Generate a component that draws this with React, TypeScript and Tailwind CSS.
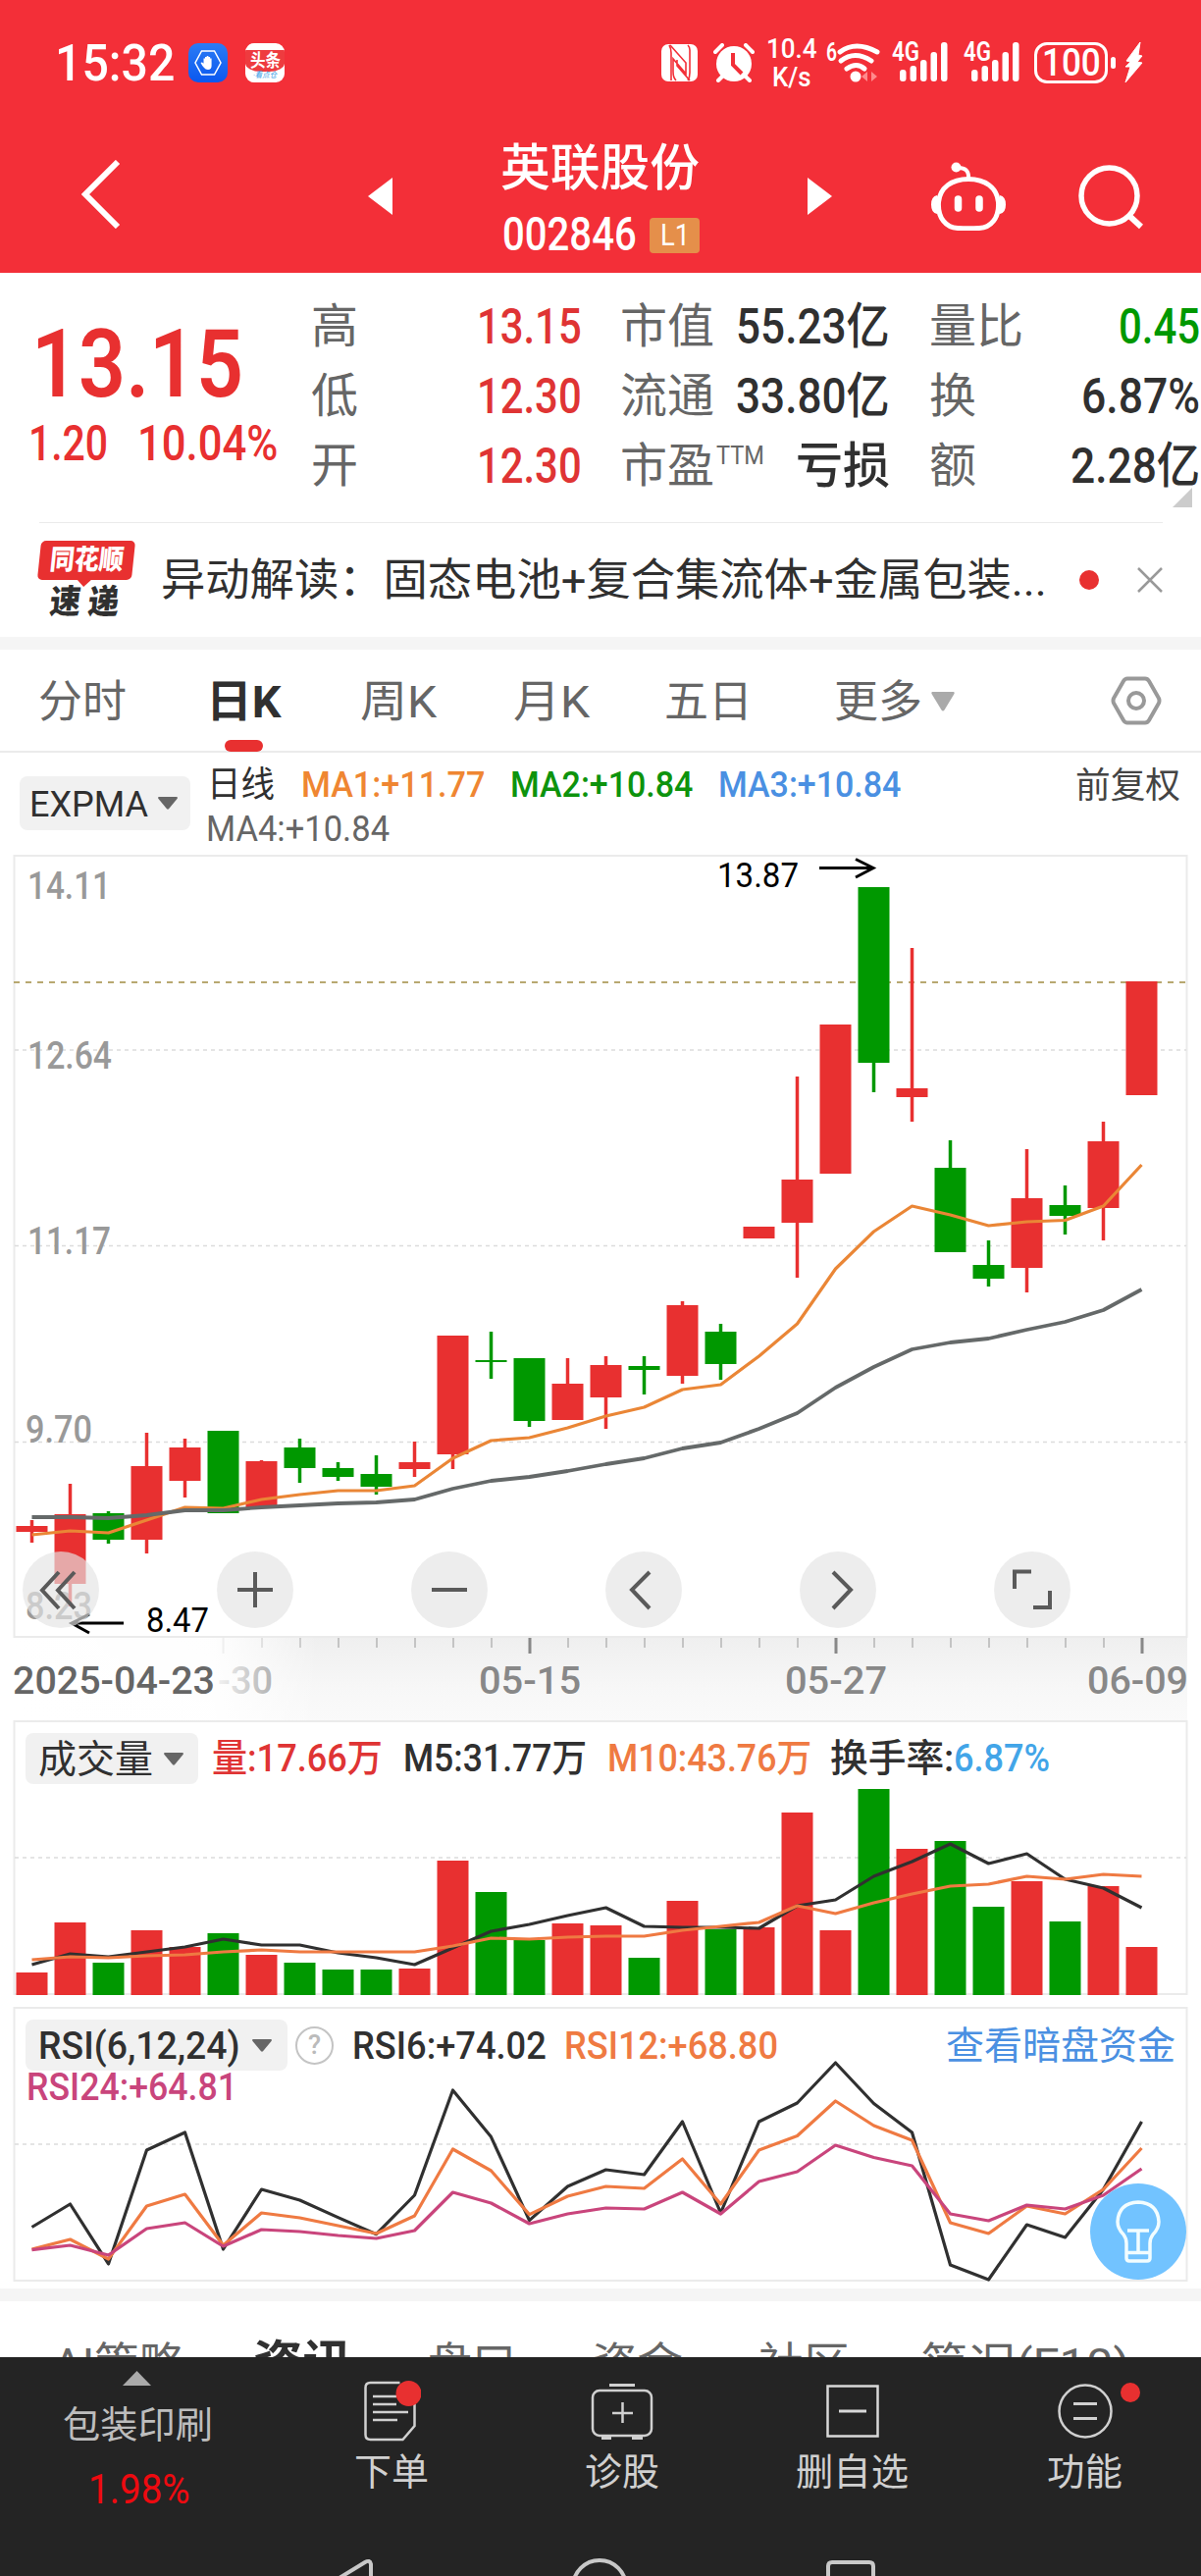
import React, { useLayoutEffect, useRef, useState } from "react"
import clsx from "clsx"

const RED = "#e83030"
const GREEN = "#009800"

// Squeezes or stretches one line of text to a given width
const Fit = ({ w, className, children }: { w: number; className?: string; children: React.ReactNode }) => {
  const ref = useRef<HTMLSpanElement>(null)
  const [scale, setScale] = useState(1)

  useLayoutEffect(() => {
    if (ref.current) setScale(w / ref.current.offsetWidth)
  }, [w, children])

  return (
    <span className={clsx("inline-flex shrink-0 whitespace-nowrap leading-none", className)} style={{ width: w }}>
      <span ref={ref} className="inline-block shrink-0 origin-left" style={{ transform: `scaleX(${scale})` }}>
        {children}
      </span>
    </span>
  )
}

/* ---------- chart data, already in page pixels ---------- */

// up, wick top, body top, body bottom, wick bottom, volume top
const CANDLES: [number, number, number, number, number, number][] = [
  [1, 1549, 1555, 1561, 1572, 2010],
  [1, 1512, 1543, 1614, 1637, 1959],
  [0, 1540, 1542, 1569, 1573, 2000],
  [1, 1460, 1494, 1569, 1583, 1967],
  [1, 1466, 1475, 1509, 1526, 1984],
  [0, 1458, 1458, 1542, 1542, 1970],
  [1, 1488, 1489, 1536, 1536, 1992],
  [0, 1466, 1475, 1496, 1511, 2000],
  [0, 1490, 1496, 1505, 1509, 2007],
  [0, 1483, 1502, 1515, 1523, 2007],
  [1, 1469, 1490, 1497, 1505, 2006],
  [1, 1361, 1361, 1482, 1497, 1896],
  [0, 1357, 1386, 1388, 1405, 1928],
  [0, 1384, 1384, 1448, 1454, 1977],
  [1, 1384, 1410, 1447, 1447, 1960],
  [1, 1382, 1391, 1424, 1456, 1962],
  [0, 1382, 1392, 1396, 1421, 1995],
  [1, 1326, 1330, 1402, 1410, 1937],
  [0, 1349, 1357, 1390, 1406, 1966],
  [1, 1250, 1250, 1262, 1262, 1964],
  [1, 1097, 1202, 1246, 1302, 1847],
  [1, 1044, 1044, 1196, 1196, 1967],
  [0, 904, 904, 1083, 1113, 1823],
  [1, 966, 1109, 1118, 1143, 1884],
  [0, 1162, 1190, 1276, 1276, 1876],
  [0, 1264, 1289, 1303, 1311, 1943],
  [1, 1171, 1221, 1292, 1317, 1917],
  [0, 1208, 1228, 1239, 1258, 1958],
  [1, 1143, 1163, 1231, 1264, 1922],
  [1, 1000, 1000, 1116, 1116, 1984],
]

const MA_FAST = [1564, 1560, 1562, 1549, 1536, 1537, 1528, 1523, 1519, 1519, 1514, 1486, 1468, 1465, 1455, 1443, 1434, 1416, 1411, 1382, 1349, 1293, 1255, 1229, 1238, 1249, 1245, 1243.5, 1229, 1187]
const MA_SLOW = [1546, 1546, 1547, 1544, 1539, 1539, 1536, 1534, 1532, 1531, 1528, 1517, 1509, 1505, 1499, 1492, 1486, 1476, 1470, 1456, 1440, 1414, 1393, 1375, 1368, 1364, 1355, 1347, 1335, 1314]
const VOL_M5 = [2002, 1991, 1994, 1989, 1984, 1976, 1982, 1982, 1990, 1995, 2002, 1985, 1968, 1961, 1952, 1944, 1963, 1964, 1964, 1965, 1942, 1936, 1912, 1897, 1879, 1899, 1889, 1915, 1924, 1944]
const VOL_M10 = [1997, 1994, 1995, 1993, 1992, 1989, 1987, 1989, 1989, 1989, 1989, 1983, 1975, 1976, 1974, 1973, 1973, 1967, 1963, 1959, 1942, 1950, 1939, 1930, 1922, 1920, 1912, 1915, 1910, 1912]
const RSI6 = [2269.5, 2246, 2307, 2191, 2173, 2292, 2231, 2242, 2259.6, 2276.7, 2237, 2130, 2177.6, 2262.6, 2228, 2211, 2216, 2162, 2255, 2162, 2143, 2102, 2143.5, 2173, 2308, 2323, 2267, 2280, 2231, 2162]
const RSI12 = [2292, 2282, 2302, 2248, 2236, 2288, 2255, 2260, 2268, 2276, 2258, 2190, 2212, 2256.6, 2238, 2228, 2230, 2200, 2246, 2191, 2176.5, 2141, 2166, 2181, 2265, 2276, 2248, 2256, 2231, 2189]
const RSI24 = [2292.6, 2288, 2298, 2271, 2265, 2289, 2272, 2274, 2278, 2281, 2273, 2234, 2245, 2266, 2256, 2250, 2251, 2234, 2256, 2223, 2213, 2186, 2198.5, 2207, 2256, 2263, 2247, 2251, 2237, 2210]

const cx = (i: number) => 32.5 + i * 39

const Line = ({ data, color, width = 3.2 }: { data: number[]; color: string; width?: number }) => (
  <polyline points={data.map((y, i) => `${cx(i)},${y}`).join(" ")} fill="none" stroke={color} strokeWidth={width} strokeLinejoin="round" />
)

const Grid = ({ y }: { y: number }) => (
  <line x1={15} x2={1209} y1={y} y2={y} stroke="#dcdcdc" strokeWidth={1.5} strokeDasharray="4 4" />
)

const ChartText = ({ x, y, w, size = 39, weight = 500, fill = "#999", children }: { x: number; y: number; w: number; size?: number; weight?: number; fill?: string; children: string }) => (
  <text x={x} y={y} fontSize={size} fontWeight={weight} fill={fill} textLength={w} lengthAdjust="spacingAndGlyphs">{children}</text>
)

/* ---------- small pieces ---------- */

const Caret = ({ className }: { className?: string }) => (
  <svg viewBox="0 0 20 13" className={clsx("h-[13px] w-5 shrink-0", className)}>
    <path d="M1 0h18q1.500 .4.500 2L11 12.300q-1 .9-2 0L.5 2Q-.5.400 1 0z" fill="currentColor" />
  </svg>
)

const Signal = ({ className }: { className?: string }) => (
  <svg viewBox="0 0 57 44" className={clsx("h-11 w-[57px] shrink-0 overflow-visible", className)} fill="#fff">
    <text x="0" y="20" fontSize="27" fontWeight="600" textLength="28" lengthAdjust="spacingAndGlyphs">4G</text>
    <rect x="8" y="29" width="6.500" height="12" rx="3" />
    <rect x="18.500" y="25" width="6.500" height="16" rx="3" />
    <rect x="29" y="19" width="6.500" height="22" rx="3" />
    <rect x="39.500" y="11" width="6.500" height="30" rx="3" />
    <rect x="50" y="1" width="6.500" height="40" rx="3" />
  </svg>
)

const StatusBar = () => (
  <div className="flex h-32 items-center text-white">
    <Fit w={122} className="ml-[56px] text-[51px] font-medium">15:32</Fit>
    <div className="ml-[14px] flex size-10 items-center justify-center rounded-[10px] bg-gradient-to-b from-[#2b7bf5] to-[#0a57ef]">
      <svg viewBox="0 0 28 26" className="h-[26px] w-7">
        <path d="M7.500 1h13L27 13l-6.500 12h-13L1 13z" fill="none" stroke="#fff" strokeWidth="1.500" />
        <path d="M10 18q-2-2-3.500-5 1.200-1.200 3 .8V8.500h1.500V7h1.700V6h1.700v1h1.700v1.500h1.500V16q0 4-3.600 4-2.600 0-4-2z" fill="#fff" />
      </svg>
    </div>
    <div className="ml-[18px] flex size-10 flex-col items-center overflow-hidden rounded-[9px] bg-white">
      <div className="mt-[7px] flex h-[22px] w-full items-center justify-center rounded-b-[40%] bg-[#ee3b3f]">
        <Fit w={31} className="text-[18px] font-bold">头条</Fit>
      </div>
      <Fit w={24} className="text-[8px] text-[#3ba0e6] italic">·看点仓</Fit>
    </div>

    <svg viewBox="0 0 37 38" className="ml-[384px] h-[38px] w-[37px] shrink-0">
      <rect width="37" height="38" rx="7" fill="#fff" />
      <path d="M9 1l16 18v11L12 15v13q0 6 3 9M29 37L16 22v-6" fill="none" stroke="#f32f38" strokeWidth="1.600" />
      <path d="M8 1q2 3 2 8v28M27 37q2-3 2-8V6q0-3-2-5" fill="none" stroke="#f32f38" strokeWidth="1.600" />
    </svg>
    <svg viewBox="0 0 42 40" className="ml-4 h-10 w-[42px] shrink-0">
      <circle cx="21" cy="21" r="18" fill="#fff" />
      <path d="M2 9l7-7M40 9l-7-7M5 38l6-6M37 38l-6-6" stroke="#fff" strokeWidth="4" strokeLinecap="round" />
      <path d="M20 10v12l9 9" fill="none" stroke="#f32f38" strokeWidth="4" />
    </svg>
    <div className="ml-[12px] flex flex-col items-center gap-[2px] font-medium">
      <Fit w={52} className="text-[28px] leading-[23px]">10.4</Fit>
      <Fit w={40} className="text-[27px] leading-[23px]">K/s</Fit>
    </div>
    <svg viewBox="0 0 55 44" className="ml-[9px] h-11 w-[55px] shrink-0 overflow-visible">
      <text x="0" y="20" fontSize="26" fontWeight="600" fill="#fff" textLength="11" lengthAdjust="spacingAndGlyphs">6</text>
      <path d="M14 11q16-12 38 0M15 20q14-11 31 0M21 28q10-7 18 0" fill="none" stroke="#fff" strokeWidth="5" strokeLinecap="round" />
      <circle cx="30" cy="36" r="5.500" fill="#fff" />
      <path d="M36 36l6-5v10zM52 36l-6-5v10z" fill="#ff8a8c" />
    </svg>
    <Signal className="ml-[12px]" />
    <Signal className="ml-4" />
    <div className="ml-[15px] flex h-[42px] w-[75px] items-center justify-center rounded-[13px] border-[3px] border-white">
      <Fit w={60} className="text-[38px] font-medium">100</Fit>
    </div>
    <div className="ml-[3px] h-3 w-[5px] rounded-full bg-white" />
    <svg viewBox="0 0 20 42" className="ml-2 h-[42px] w-5 shrink-0">
      <path d="M17 0L3 19l4 1-5 5 5 0L2 41l17-20-5-1 5-6-4-1z" fill="#fff" stroke="#fff" />
    </svg>
  </div>
)

const TitleBar = () => (
  <div className="flex h-[150px] text-white">
    <svg viewBox="0 0 40 70" className="mt-[35px] ml-[83px] h-[70px] w-10 shrink-0">
      <path d="M37 2L4 35l33 33" fill="none" stroke="#fff" strokeWidth="6" />
    </svg>
    <svg viewBox="0 0 25 38" className="mt-[53px] ml-[252px] h-[38px] w-[25px] shrink-0">
      <path d="M25 0v38L0 19z" fill="#fff" />
    </svg>
    <div className="ml-[110px] flex w-[203px] flex-col">
      <Fit w={203} className="mt-[18px] text-[51px] font-medium">英联股份</Fit>
      <div className="mt-[18px] flex items-center">
        <Fit w={137} className="ml-[2px] h-12 items-center text-[48px] font-medium">002846</Fit>
        <div className="mt-px ml-[13px] flex h-9 w-[51px] items-center justify-center rounded-[4px] bg-[#e58f4a]">
          <Fit w={30} className="text-[31px]">L1</Fit>
        </div>
      </div>
    </div>
    <svg viewBox="0 0 25 38" className="mt-[53px] ml-[110px] h-[38px] w-[25px] shrink-0">
      <path d="M0 0v38l25-19z" fill="#fff" />
    </svg>
    <svg viewBox="0 0 76 70" className="mt-[37px] ml-[101px] h-[70px] w-[76px] shrink-0" fill="none" stroke="#fff" strokeWidth="5">
      <path d="M38 17.500C55 17.500 67 26 68.500 41 69.500 57 61 67 49 67.500q-11 .5-22 0C15 67 6.500 57 7.500 41 9 26 21 17.500 38 17.500z" />
      <path d="M26 6q13-1 12 11" strokeWidth="4" />
      <circle cx="25.500" cy="5.500" r="5" fill="#fff" stroke="none" />
      <path d="M6 34q-6 1-6 9.500T6 53zM70 34q6 1 6 9.500T70 53z" fill="#fff" stroke="none" />
      <path d="M27.500 38v9M49 38v9" strokeWidth="7.500" strokeLinecap="round" />
    </svg>
    <svg viewBox="0 0 66 66" className="mt-[40px] ml-[74px] h-[66px] w-[66px] shrink-0" fill="none" stroke="#fff" strokeWidth="5.500">
      <circle cx="31.500" cy="31.500" r="28.500" />
      <path d="M52 52l12 11" strokeWidth="6" />
    </svg>
  </div>
)

type Quote = { label: React.ReactNode; value: string; w: number; tone?: string }

const QuoteCol = ({ rows, className }: { rows: Quote[]; className?: string }) => (
  <div className={clsx("flex flex-col text-[48px]", className)}>
    {rows.map((r, i) => (
      <div key={i} className="flex h-[71px] items-center justify-between">
        <span className="leading-none whitespace-nowrap text-[#666]">{r.label}</span>
        <Fit w={r.w} className={clsx("text-[50px] font-medium", r.tone ?? "text-[#303030]")}>{r.value}</Fit>
      </div>
    ))}
  </div>
)

const QuotePanel = () => (
  <div className="relative flex h-[254px] bg-white">
    <div className="flex w-[317px] shrink-0 flex-col text-[#e83030]">
      <Fit w={216} className="mt-[45px] ml-[32px] text-[97px] font-semibold">13.15</Fit>
      <div className="mt-[7px] flex text-[50px] font-medium">
        <Fit w={81} className="ml-[29px]">1.20</Fit>
        <Fit w={143} className="ml-[30px]">10.04%</Fit>
      </div>
    </div>
    <QuoteCol
      className="mt-[19px] w-[276px]"
      rows={[
        { label: "高", value: "13.15", w: 107, tone: "text-[#df3434]" },
        { label: "低", value: "12.30", w: 107, tone: "text-[#df3434]" },
        { label: "开", value: "12.30", w: 107, tone: "text-[#df3434]" },
      ]}
    />
    <QuoteCol
      className="mt-[19px] ml-[39px] w-[275px]"
      rows={[
        { label: "市值", value: "55.23亿", w: 157 },
        { label: "流通", value: "33.80亿", w: 157 },
        {
          label: (
            <span className="flex">
              市盈<Fit w={49} className="ml-[2px] text-[26px]">TTM</Fit>
            </span>
          ),
          value: "亏损",
          w: 96,
        },
      ]}
    />
    <QuoteCol
      className="mt-[19px] ml-[40px] w-[276px]"
      rows={[
        { label: "量比", value: "0.45", w: 83, tone: "text-[#009800]" },
        { label: "换", value: "6.87%", w: 121 },
        { label: "额", value: "2.28亿", w: 132 },
      ]}
    />
    <svg viewBox="0 0 20 20" className="absolute right-[9px] bottom-[15px] size-5">
      <path d="M20 0v20H0z" fill="#ccc" />
    </svg>
  </div>
)

const NewsRow = () => (
  <div className="flex h-[117px] items-center bg-white">
    <div className="ml-10 h-px w-[1145px] self-start bg-[#ebebeb]" />
    <div className="-ml-[1145px] flex w-24 shrink-0 flex-col">
      <div className="relative flex h-10 -skew-x-6 items-center justify-center rounded-[5px] bg-[#e83030]">
        <Fit w={75} className="text-[28px] font-black text-white">同花顺</Fit>
        <svg viewBox="0 0 16 8" className="absolute top-[39px] left-[40px] h-2 w-4">
          <path d="M0 0h16L8 8z" fill="#e83030" />
        </svg>
      </div>
      <Fit w={70} className="mt-[5px] ml-[11px] -skew-x-6 text-[34px] font-black text-[#303030]">速 递</Fit>
    </div>
    <Fit w={903} className="mt-[2px] ml-[28px] text-[45px] text-[#303030]">异动解读：固态电池+复合集流体+金属包装...</Fit>
    <div className="ml-[33px] size-5 shrink-0 rounded-full bg-[#e83030]" />
    <svg viewBox="0 0 26 26" className="ml-[39px] size-[26px] shrink-0">
      <path d="M1 1l24 24M25 1L1 25" stroke="#999" strokeWidth="2.500" />
    </svg>
  </div>
)

const KLineTabs = () => (
  <div className="flex h-[105px] items-center border-b-2 border-[#ebebeb] bg-white pt-[3px] text-[45px] text-[#666]">
    <Fit w={90} className="ml-[39px]">分时</Fit>
    <div className="relative ml-[81px] flex h-full items-center">
      <Fit w={77} className="font-bold text-[#303030]">日K</Fit>
      <div className="absolute -bottom-px left-[19px] h-3 w-[39px] rounded-full bg-[#e83030]" />
    </div>
    <Fit w={78} className="ml-[80px]">周K</Fit>
    <Fit w={78} className="ml-[78px]">月K</Fit>
    <Fit w={90} className="ml-[76px]">五日</Fit>
    <Fit w={90} className="ml-[83px]">更多</Fit>
    <svg viewBox="0 0 24 20" className="ml-[9px] h-5 w-6">
      <path d="M1 0h22q1 .5.500 2L13.500 18.500q-1.500 2-3 0L.5 2Q0 .5 1 0z" fill="#aaa" />
    </svg>
    <svg viewBox="0 0 52 50" className="-mt-[3px] ml-[159px] h-[50px] w-[52px]" fill="none" stroke="#999" strokeWidth="4">
      <path d="M17 2.500h18q2.500 0 4 2.500l10 17.500q1 2.500 0 5L39 45q-1.500 2.500-4 2.500H17q-2.500 0-4-2.500L3 27.500q-1-2.500 0-5L13 5q1.500-2.500 4-2.500z" />
      <circle cx="26" cy="25" r="8" />
    </svg>
  </div>
)

const IndicatorBar = () => (
  <div className="flex h-[104px] bg-white text-[36px]">
    <div className="mt-6 ml-5 flex h-[55px] w-[174px] items-center rounded-lg bg-[#f1f1f1]">
      <Fit w={121} className="mt-[2px] ml-[10px] text-[#303030]">EXPMA</Fit>
      <Caret className="ml-[10px] text-[#666]" />
    </div>
    <div className="ml-[17px] flex w-[720px] flex-col">
      <div className="mt-[9px] flex h-[48px] items-center font-medium">
        <Fit w={69} className="font-normal text-[#303030]">日线</Fit>
        <Fit w={187} className="ml-[27px] text-[#ef8632]">MA1:+11.77</Fit>
        <Fit w={186} className="ml-[26px] text-[#0d930d]">MA2:+10.84</Fit>
        <Fit w={186} className="ml-[26px] text-[#4a90e2]">MA3:+10.84</Fit>
      </div>
      <Fit w={187} className="-ml-px h-[42px] items-center text-[#666]">MA4:+10.84</Fit>
    </div>
    <Fit w={107} className="mt-[16px] ml-[165px] text-[#444]">前复权</Fit>
  </div>
)

const CONTROLS = [
  { name: "rewind", d: "M37 21L20 39.500 37 58M53 21L36 39.500 53 58" },
  { name: "zoomIn", d: "M21 39h36M39 21v36" },
  { name: "zoomOut", d: "M21 39h36" },
  { name: "prev", d: "M45 21L27 39l18 19" },
  { name: "next", d: "M34 21l18 18-18 19" },
  { name: "expand", d: "M38 20.500H21V38M40 57h17V40" },
]

const MainChart = () => (
  <div className="relative h-[798px] bg-white">
    <svg viewBox="0 871 1224 798" className="block h-[798px] w-[1224px]">
      <rect x="14.500" y="872" width="1195" height="796" fill="none" stroke="#ebebeb" strokeWidth="2" />
      <Grid y={1070} />
      <Grid y={1269.5} />
      <Grid y={1469.5} />
      <line x1="14" x2="1209" y1="1001" y2="1001" stroke="#b8a870" strokeWidth="2" strokeDasharray="6 6" />
      <ChartText x={28} y={916} w={85}>14.11</ChartText>
      <ChartText x={28} y={1089} w={86}>12.64</ChartText>
      <ChartText x={28} y={1278} w={85}>11.17</ChartText>
      <ChartText x={26} y={1470} w={68}>9.70</ChartText>
      <ChartText x={26} y={1650} w={68}>8.23</ChartText>
      {CANDLES.map(([up, wt, bt, bb, wb], i) => (
        <g key={i} fill={up ? RED : GREEN}>
          <rect x={cx(i) - 1.75} y={wt} width={3.5} height={wb - wt} />
          <rect x={cx(i) - 16} y={bt} width={32} height={bb - bt} />
        </g>
      ))}
      <Line data={MA_FAST} color="#ea8636" />
      <Line data={MA_SLOW} color="#656969" width={3.8} />
      <ChartText x={731} y={904} w={83} size={35} weight={400} fill="#000">13.87</ChartText>
      <path d="M835 884.500h55M872 875.500l18 9-18 9.500" fill="none" stroke="#000" strokeWidth="3" />
      <ChartText x={149} y={1663} w={64} size={35} weight={400} fill="#000">8.47</ChartText>
      <path d="M126 1654H74M91 1645l-18 9 18 10" fill="none" stroke="#000" strokeWidth="3" />
    </svg>
    <div className="absolute top-[710px] left-[23px] flex gap-[120px]">
      {CONTROLS.map((c) => (
        <div key={c.name} className="size-[78px] rounded-full bg-[#e4e4e4]/67">
          <svg viewBox="0 0 78 78" className="size-[78px]">
            <path d={c.d} fill="none" stroke="#5a5a5a" strokeWidth="4" />
          </svg>
        </div>
      ))}
    </div>
  </div>
)

const DateAxis = () => (
  <div className="h-[84px] bg-white">
    <svg viewBox="0 1669 1224 84" className="block h-[84px] w-[1224px]">
      <defs>
        <linearGradient id="axis" x1="0" y1="0" x2="0" y2="1">
          <stop offset="0" stopColor="#efefef" />
          <stop offset=".6" stopColor="#f7f7f7" />
          <stop offset="1" stopColor="#fafafa" />
        </linearGradient>
        <linearGradient id="axisFade" x1="0" y1="0" x2="1" y2="0">
          <stop offset="0" stopColor="#fff" />
          <stop offset=".66" stopColor="#fff" stopOpacity=".92" />
          <stop offset="1" stopColor="#fff" stopOpacity="0" />
        </linearGradient>
      </defs>
      <rect x="14" y="1669" width="1196" height="84" fill="url(#axis)" />
      {CANDLES.map((_, i) => {
        const major = i === 13 || i === 21 || i === 29
        if (i < 5) return null
        if (i === 5) return <rect key={i} x={cx(i) - 1} y={1669} width={2} height={16} fill="#999" />
        return (
          <rect key={i} x={cx(i) - (major ? 1 : 0.5)} y={1669} width={major ? 3 : 2} height={major ? 16 : 10} fill={major ? "#888" : "#c4c4c4"} />
        )
      })}
      <ChartText x={222} y={1726} w={56} fill="#808080">-30</ChartText>
      <rect x="14" y="1669" width="310" height="84" fill="url(#axisFade)" />
      <ChartText x={13} y={1726} w={206} fill="#666">2025-04-23</ChartText>
      <ChartText x={488} y={1726} w={104} fill="#888">05-15</ChartText>
      <ChartText x={800} y={1726} w={104} fill="#888">05-27</ChartText>
      <ChartText x={1108} y={1726} w={103} fill="#888">06-09</ChartText>
    </svg>
  </div>
)

const VolumeChart = () => (
  <div className="relative h-[292px] bg-white">
    <svg viewBox="0 1753 1224 292" className="absolute inset-0 h-[292px] w-[1224px]">
      <rect x="14.500" y="1754" width="1195" height="278" fill="none" stroke="#ebebeb" strokeWidth="2" />
      <Grid y={1893} />
      {CANDLES.map((c, i) => (
        <rect key={i} x={cx(i) - 16} y={c[5]} width={32} height={2033 - c[5]} fill={c[0] ? RED : GREEN} />
      ))}
      <Line data={VOL_M5} color="#303030" />
      <Line data={VOL_M10} color="#ef7a42" />
    </svg>
    <div className="relative flex items-center pt-[13px] text-[39px] font-medium">
      <div className="ml-[26px] flex h-[52px] w-44 items-center rounded-lg bg-[#f1f1f1]">
        <Fit w={117} className="mt-[2px] ml-[13px] font-normal text-[#303030]">成交量</Fit>
        <Caret className="ml-[11px] text-[#666]" />
      </div>
      <Fit w={174} className="mt-px ml-[14px] text-[#df3434]">量:17.66万</Fit>
      <Fit w={187} className="mt-px ml-[21px] text-[#303030]">M5:31.77万</Fit>
      <Fit w={208} className="mt-px ml-[21px] text-[#ef7a42]">M10:43.76万</Fit>
      <Fit w={126} className="mt-px ml-[19px] text-[#303030]">换手率:</Fit>
      <Fit w={98} className="mt-px text-[#42a5e8]">6.87%</Fit>
    </div>
  </div>
)

const RsiChart = () => (
  <div className="relative h-[287px] bg-white">
    <svg viewBox="0 2045 1224 287" className="absolute inset-0 h-[287px] w-[1224px]">
      <rect x="14.500" y="2046" width="1195" height="278" fill="none" stroke="#ebebeb" strokeWidth="2" />
      <Grid y={2185} />
      <Line data={RSI6} color="#303030" />
      <Line data={RSI12} color="#ef7a42" />
      <Line data={RSI24} color="#c9457c" />
    </svg>
    <div className="relative flex items-center pt-[13px] text-[39px] font-medium">
      <div className="ml-[26px] flex h-[52px] w-[267px] items-center rounded-lg bg-[#f1f1f1]">
        <Fit w={206} className="mt-[2px] ml-[13px] text-[#303030]">RSI(6,12,24)</Fit>
        <Caret className="ml-[12px] text-[#666]" />
      </div>
      <div className="ml-[8px] flex size-[39px] items-center justify-center rounded-full border-[2.5px] border-[#c4c4c4] text-[27px] leading-none text-[#bbb]">?</div>
      <Fit w={198} className="mt-[2px] ml-[19px] text-[#303030]">RSI6:+74.02</Fit>
      <Fit w={218} className="mt-[2px] ml-[18px] text-[#ef7a42]">RSI12:+68.80</Fit>
      <Fit w={234} className="mt-[2px] ml-[171px] font-normal text-[#4a90e2]">查看暗盘资金</Fit>
    </div>
    <Fit w={215} className="relative -mt-[2px] ml-[27px] text-[39px] font-medium text-[#c9457c]">RSI24:+64.81</Fit>
    <div className="absolute top-[180px] right-[15px] flex size-[98px] items-center justify-center rounded-full bg-[#72c3ff]">
      <svg viewBox="0 0 46 64" className="h-16 w-[46px]" fill="none" stroke="#f2fdff" strokeWidth="3.500">
        <path d="M11 44q0-5-3-9-6-6-6-13Q3 3 23 2q20 1 21 20 0 7-6 13-3 4-3 9v15q0 3-3 3H14q-3 0-3-3z" />
        <path d="M12 31h22M23 31v22M11 53.500h24" />
      </svg>
    </div>
  </div>
)

const InfoTabs = () => (
  <div className="flex h-[57px] items-start overflow-hidden bg-white pt-[42px] text-[45px] text-[#666]">
    <Fit w={134} className="ml-[54px]">AI策略</Fit>
    <Fit w={101} className="-mt-[3px] ml-[70px] text-[50px] font-bold text-[#303030]">资讯</Fit>
    <Fit w={90} className="ml-[77px]">盘口</Fit>
    <Fit w={93} className="ml-[77px]">资金</Fit>
    <Fit w={93} className="ml-[77px]">社区</Fit>
    <Fit w={214} className="ml-[72px]">简况(F10)</Fit>
  </div>
)

const BottomItem = ({ label, w, className, children }: { label: string; w: number; className?: string; children: React.ReactNode }) => (
  <div className={clsx("flex flex-col items-center", className)}>
    <div className="mt-[24px] flex h-[62px] items-center">{children}</div>
    <Fit w={w} className="mt-[12px] text-[38px] text-[#d0d0d0]">{label}</Fit>
  </div>
)

const BottomBar = () => (
  <div className="flex h-[223px] flex-col overflow-hidden bg-[#242424]">
    <div className="flex h-[203px]">
      <div className="ml-[64px] flex w-[153px] flex-col items-center">
        <svg viewBox="0 0 29 15" className="mt-[14px] mr-[2px] h-[15px] w-[29px]">
          <path d="M14.500 0L29 15H0z" fill="#aaa" />
        </svg>
        <Fit w={153} className="mt-[21px] text-[38px] text-[#bdbdbd]">包装印刷</Fit>
        <Fit w={104} className="mt-[26px] ml-[2px] text-[42px] text-[#ee0a10]">1.98%</Fit>
      </div>
      <BottomItem label="下单" w={76} className="ml-[144px] w-[76px]">
        <svg viewBox="0 0 60 62" className="h-[62px] w-[60px]" fill="none" stroke="#d0d0d0" strokeWidth="2.500">
          <path d="M53.500 22v24L41.500 60h-33q-5 0-5-5V7q0-5 5-5h30" />
          <path d="M11 16h24M11 24h24M11 32h36M11 40h25" />
          <circle cx="47.500" cy="13" r="13" fill="#e83030" stroke="none" />
        </svg>
      </BottomItem>
      <BottomItem label="诊股" w={76} className="ml-[159px] w-[76px]">
        <svg viewBox="0 0 64 62" className="h-[62px] w-16" fill="none" stroke="#d0d0d0" strokeWidth="2.500">
          <rect x="2" y="10" width="60" height="46" rx="7" />
          <path d="M19 4.500h26" strokeWidth="3" />
          <path d="M22 33h21M32.500 22v21" />
          <path d="M11 58h10M42 58h11" strokeWidth="4" />
        </svg>
      </BottomItem>
      <BottomItem label="删自选" w={115} className="ml-[139px] w-[115px]">
        <svg viewBox="0 0 54 62" className="h-[62px] w-[54px]" fill="none" stroke="#d8d8d8" strokeWidth="2.500">
          <rect x="1.500" y="5.500" width="51" height="51" />
          <path d="M13 31h28" strokeWidth="3" />
        </svg>
      </BottomItem>
      <BottomItem label="功能" w={77} className="relative ml-[141px] w-[77px]">
        <svg viewBox="0 0 56 62" className="h-[62px] w-14" fill="none" stroke="#d0d0d0" strokeWidth="2.500">
          <circle cx="28" cy="31" r="26.500" />
          <path d="M16 23.500h24M16 38.500h24" strokeWidth="3" />
        </svg>
        <div className="absolute top-[26px] left-[75px] size-5 rounded-full bg-[#e83030]" />
      </BottomItem>
    </div>
    {/* system navigation, partly below the fold */}
    <svg viewBox="0 0 1224 20" className="h-5 w-[1224px] shrink-0" fill="none" stroke="#c8c8c8" strokeWidth="4">
      <path d="M378 24V8q-1-5-6-2l-36 22" />
      <circle cx="611" cy="31" r="27" />
      <path d="M844 24V10q0-4 4-4h38q4 0 4 4v14" />
    </svg>
  </div>
)

export default function App() {
  return (
    <div className="flex h-[2625px] w-[1224px] flex-col overflow-hidden bg-white font-['Roboto','Noto_Sans_CJK_SC',sans-serif]">
      <header className="h-[278px] bg-[#f32f38]">
        <StatusBar />
        <TitleBar />
      </header>
      <QuotePanel />
      <NewsRow />
      <div className="h-[13px] bg-[#f5f5f5]" />
      <KLineTabs />
      <IndicatorBar />
      <MainChart />
      <DateAxis />
      <VolumeChart />
      <RsiChart />
      <div className="h-[13px] bg-[#f5f5f5]" />
      <InfoTabs />
      <BottomBar />
    </div>
  )
}
